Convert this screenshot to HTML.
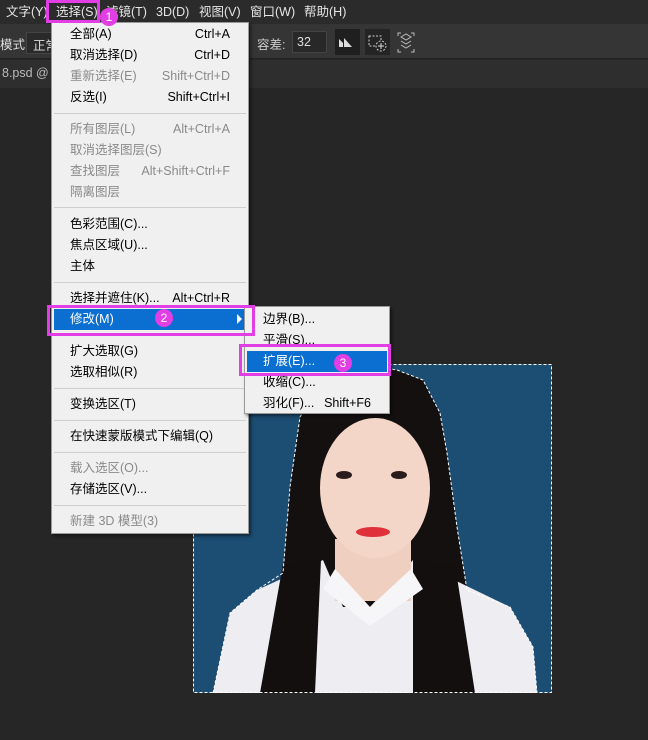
<!DOCTYPE html>
<html><head><meta charset="utf-8"><style>
*{margin:0;padding:0;box-sizing:border-box}
body{width:648px;height:740px;background:#262626;position:relative;overflow:hidden;font-family:"Liberation Sans","Noto Sans CJK SC",sans-serif;font-size:12.5px}
.a{position:absolute;white-space:nowrap}
.mb{left:0;top:0;width:648px;height:24px;background:#2b2b2b}
.mb span{position:absolute;top:3px;color:#e6e6e6;font-size:12.5px;line-height:18px;height:18px}
.tb{left:0;top:24px;width:648px;height:35px;background:#353535;border-bottom:1px solid #222}
.tab{left:0;top:60px;width:648px;height:28px;background:#2e2e2e}
.menu{left:51px;top:22px;width:198px;height:512px;background:#f0f0f0;border:1px solid #999;box-shadow:2px 2px 3px rgba(0,0,0,.5)}
.it{position:absolute;left:18px;color:#000;line-height:21px;height:21px}
.sc{position:absolute;right:18px;color:#000;line-height:21px}
.d{color:#8a8a8a}
.sep{position:absolute;left:2px;right:2px;height:1px;background:#cfcfcf}
.sub{left:244px;top:306px;width:146px;height:108px;background:#f0f0f0;border:1px solid #999;box-shadow:2px 2px 3px rgba(0,0,0,.5)}
.mag{position:absolute;border:3px solid #e23ee6}
.badge{position:absolute;width:18px;height:18px;border-radius:50%;background:#e23ee6;color:#fff;font-size:12px;text-align:center;line-height:18px}
</style></head><body>
<div class="a mb">
<span style="left:6px">文字(Y)</span>
<span style="left:56px">选择(S)</span>
<span style="left:106px">滤镜(T)</span>
<span style="left:156px">3D(D)</span>
<span style="left:199px">视图(V)</span>
<span style="left:250px">窗口(W)</span>
<span style="left:304px">帮助(H)</span>
</div>
<div class="a tb">
<span class="a" style="left:0;top:10px;color:#ddd">模式:</span>
<div class="a" style="left:26px;top:8px;width:40px;height:22px;background:#2a2a2a;border:1px solid #444;color:#ddd;padding:2px 6px">正常</div>
<span class="a" style="left:257px;top:10px;color:#ccc">容差:</span>
<div class="a" style="left:292px;top:7px;width:35px;height:22px;background:#282828;border:1px solid #444;color:#ddd;padding:3px 4px">32</div>
<div class="a" style="left:335px;top:5px;width:25px;height:26px;background:#1f1f1f">
<svg width="25" height="26"><path d="M4 18V10l4 4v4zM9 18V9l8 9z" fill="#ddd"/></svg></div>
<div class="a" style="left:365px;top:5px;width:25px;height:26px;background:#242424">
<svg width="25" height="26"><rect x="4" y="7" width="12" height="10" fill="none" stroke="#ccc" stroke-dasharray="2 1.5"/><circle cx="16" cy="17" r="5" fill="#242424" stroke="#ccc" stroke-dasharray="2 1.5"/><path d="M16 14v6M13 17h6" stroke="#ddd"/></svg></div>
<svg class="a" style="left:396px;top:5px" width="20" height="26"><path d="M2 7V4h3M15 4h3v3M2 20v3h3M18 20v3h-3" stroke="#bbb" fill="none"/><path d="M5 8l5-3 5 3-5 3zM5 12l5 3 5-3M5 16l5 3 5-3" stroke="#bbb" fill="none"/></svg>
</div>
<div class="a tab"><span class="a" style="left:2px;top:6px;color:#bbb">8.psd @ 1</span></div>

<svg class="a" style="left:193px;top:364px" width="359" height="329">
<rect width="359" height="329" fill="#1c4d72"/>
<path d="M204,6 L230,16 L247,49 L254,89 L264,163 L274,226 L280,329 L85,329 L90,209 L97,123 L107,53 C130,15 170,0 204,6 Z" fill="#141010"/>
<path d="M20,329 L37,249 L64,226 L130,196 L150,243 L177,243 L220,196 L317,243 L340,283 L344,329 Z" fill="#eeeef2"/>
<path d="M67,329 L90,200 L128,196 L122,329Z M220,329 L220,196 L262,200 L282,329Z" fill="#130f0f"/>
<rect x="142" y="175" width="76" height="62" fill="#efcfc0"/>
<path d="M142,205 L177,243 L218,205 L230,225 L177,262 L130,225Z" fill="#f6f6f8"/>
<ellipse cx="182" cy="124" rx="55" ry="70" fill="#f3d6c8"/>
<path d="M110,90 C120,30 230,20 252,90 C235,45 190,35 175,50 C150,45 122,60 112,100Z" fill="#141010"/>
<ellipse cx="151" cy="111" rx="8" ry="4" fill="#2a1c1c"/><ellipse cx="206" cy="111" rx="8" ry="4" fill="#2a1c1c"/>
<ellipse cx="180" cy="168" rx="17" ry="5" fill="#e0303a"/>
<path d="M204,6 L230,16 L247,49 L254,89 L264,163 L274,226 L317,243 L340,283 L344,329 M20,329 L37,249 L64,226 L90,209 L97,123 L107,53 C130,15 170,0 204,6" fill="none" stroke="#fff" stroke-dasharray="3 2"/>
<rect x="0.5" y="0.5" width="358" height="328" fill="none" stroke="#fff" stroke-dasharray="3 2"/>
</svg>

<div class="a menu">
<div class="it" style="top:1px">全部(A)</div><div class="sc" style="top:1px">Ctrl+A</div>
<div class="it" style="top:22px">取消选择(D)</div><div class="sc" style="top:22px">Ctrl+D</div>
<div class="it d" style="top:43px">重新选择(E)</div><div class="sc d" style="top:43px">Shift+Ctrl+D</div>
<div class="it" style="top:64px">反选(I)</div><div class="sc" style="top:64px">Shift+Ctrl+I</div>
<div class="sep" style="top:90px"></div>
<div class="it d" style="top:96px">所有图层(L)</div><div class="sc d" style="top:96px">Alt+Ctrl+A</div>
<div class="it d" style="top:117px">取消选择图层(S)</div>
<div class="it d" style="top:138px">查找图层</div><div class="sc d" style="top:138px">Alt+Shift+Ctrl+F</div>
<div class="it d" style="top:159px">隔离图层</div>
<div class="sep" style="top:184px"></div>
<div class="it" style="top:191px">色彩范围(C)...</div>
<div class="it" style="top:212px">焦点区域(U)...</div>
<div class="it" style="top:233px">主体</div>
<div class="sep" style="top:259px"></div>
<div class="it" style="top:265px">选择并遮住(K)...</div><div class="sc" style="top:265px">Alt+Ctrl+R</div>
<div style="position:absolute;left:2px;right:2px;top:286px;height:21px;background:#0a6fd0"></div>
<div class="it" style="top:286px;color:#fff">修改(M)</div><div class="a" style="right:6px;top:291px;width:0;height:0;border-left:5px solid #fff;border-top:5px solid transparent;border-bottom:5px solid transparent"></div>
<div class="sep" style="top:312px"></div>
<div class="it" style="top:318px">扩大选取(G)</div>
<div class="it" style="top:339px">选取相似(R)</div>
<div class="sep" style="top:365px"></div>
<div class="it" style="top:371px">变换选区(T)</div>
<div class="sep" style="top:397px"></div>
<div class="it" style="top:403px">在快速蒙版模式下编辑(Q)</div>
<div class="sep" style="top:429px"></div>
<div class="it d" style="top:435px">载入选区(O)...</div>
<div class="it" style="top:456px">存储选区(V)...</div>
<div class="sep" style="top:482px"></div>
<div class="it d" style="top:488px">新建 3D 模型(3)</div>
</div>

<div class="a sub">
<div class="it" style="left:18px;top:2px">边界(B)...</div>
<div class="it" style="left:18px;top:23px">平滑(S)...</div>
<div style="position:absolute;left:2px;right:2px;top:44px;height:21px;background:#0a6fd0"></div>
<div class="it" style="left:18px;top:44px;color:#fff">扩展(E)...</div>
<div class="it" style="left:18px;top:65px">收缩(C)...</div>
<div class="it" style="left:18px;top:86px">羽化(F)...</div><div class="sc" style="right:18px;top:86px">Shift+F6</div>
</div>

<div class="mag" style="left:46px;top:0;width:54px;height:23px"></div>
<div class="badge" style="left:100px;top:8px">1</div>
<div class="mag" style="left:47px;top:305px;width:208px;height:31px"></div>
<div class="badge" style="left:155px;top:309px">2</div>
<div class="mag" style="left:239px;top:344px;width:152px;height:32px"></div>
<div class="badge" style="left:334px;top:354px">3</div>
</body></html>
